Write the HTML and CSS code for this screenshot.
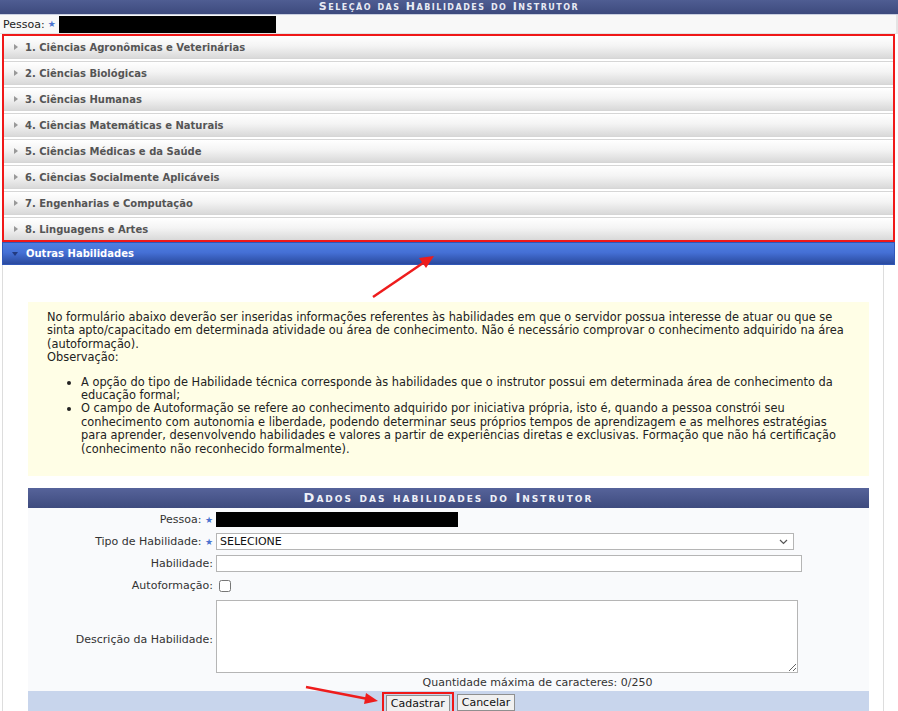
FILE: index.html
```html
<!DOCTYPE html>
<html lang="pt-BR">
<head>
    <meta charset="UTF-8">
    <meta name="viewport" content="width=device-width, initial-scale=1.0">
    <title>Seleção das Habilidades do Instrutor</title>
    <link rel="stylesheet" href="styles.css">
</head>
<body>

<div class="page">
    <div class="caption">Seleção das Habilidades do Instrutor</div>
    <div class="pessoa-row">
        <span>Pessoa:</span>
        <span class="req">&#9733;</span>
        <span class="redacted"></span>
    </div>

    <div class="areas">
        <div class="area"><span class="tri"></span>1. Ciências Agronômicas e Veterinárias</div>
        <div class="area"><span class="tri"></span>2. Ciências Biológicas</div>
        <div class="area"><span class="tri"></span>3. Ciências Humanas</div>
        <div class="area"><span class="tri"></span>4. Ciências Matemáticas e Naturais</div>
        <div class="area"><span class="tri"></span>5. Ciências Médicas e da Saúde</div>
        <div class="area"><span class="tri"></span>6. Ciências Socialmente Aplicáveis</div>
        <div class="area"><span class="tri"></span>7. Engenharias e Computação</div>
        <div class="area"><span class="tri"></span>8. Linguagens e Artes</div>
    </div>

    <div class="area active"><span class="tri down"></span>Outras Habilidades</div>

    <div class="panel">
        <div class="info">
            <p>No formulário abaixo deverão ser inseridas informações referentes às habilidades em que o servidor possua interesse de atuar ou que se sinta apto/capacitado em determinada atividade ou área de conhecimento. Não é necessário comprovar o conhecimento adquirido na área (autoformação).<br>Observação:</p>
            <ul>
                <li>A opção do tipo de Habilidade técnica corresponde às habilidades que o instrutor possui em determinada área de conhecimento da educação formal;</li>
                <li>O campo de Autoformação se refere ao conhecimento adquirido por iniciativa própria, isto é, quando a pessoa constrói seu conhecimento com autonomia e liberdade, podendo determinar seus próprios tempos de aprendizagem e as melhores estratégias para aprender, desenvolvendo habilidades e valores a partir de experiências diretas e exclusivas. Formação que não há certificação (conhecimento não reconhecido formalmente).</li>
            </ul>
        </div>

        <form class="form">
            <div class="form-caption">Dados das habilidades do Instrutor</div>
            <div class="form-body">
                <label class="lbl">Pessoa: <span class="req">&#9733;</span></label>
                <div class="field"><span class="redacted small"></span></div>

                <label class="lbl" for="tipo">Tipo de Habilidade: <span class="req">&#9733;</span></label>
                <div class="field">
                    <div class="select-wrap">
                        <select id="tipo"><option>SELECIONE</option></select>
                        <svg class="chev" width="9" height="6" viewBox="0 0 9 6"><path d="M1 1 L4.5 4.5 L8 1" fill="none" stroke="#555" stroke-width="1.2"/></svg>
                    </div>
                </div>

                <label class="lbl" for="habilidade">Habilidade:</label>
                <div class="field"><input type="text" id="habilidade" class="txt"></div>

                <label class="lbl" for="auto">Autoformação:</label>
                <div class="field"><input type="checkbox" id="auto" class="chk"></div>

                <label class="lbl desc-lbl" for="descricao">Descrição da Habilidade:</label>
                <div class="field"><textarea id="descricao"></textarea></div>

                <div></div>
                <div class="counter">Quantidade máxima de caracteres: 0/250</div>
            </div>
            <div class="form-foot">
                <span class="highlight"><button type="button">Cadastrar</button></span>
                <button type="button">Cancelar</button>
            </div>
        </form>
    </div>

    <svg class="arrows" width="898" height="711" viewBox="0 0 898 711">
        <line x1="373" y1="297" x2="426" y2="261" stroke="#ee1c1c" stroke-width="2.5"/>
        <polygon points="434,256 419,258 426,268" fill="#ee1c1c"/>
        <line x1="306" y1="687" x2="368" y2="699" stroke="#ee1c1c" stroke-width="2.5"/>
        <polygon points="378,701 366,693 364,704" fill="#ee1c1c"/>
    </svg>
</div>

</body>
</html>
```

FILE: styles.css
```css
body {
    margin: 0;
    font-family: "DejaVu Sans", Verdana, sans-serif;
    font-size: 11px;
    color: #222;
    background-color: white;
}
.page {
    position: relative;
    width: 898px;
    height: 711px;
    overflow: hidden;
}
.caption {
    height: 14px;
    line-height: 14px;
    background: linear-gradient(#4f5d92, #3d4a7d);
    color: #e8ebf5;
    font-weight: bold;
    font-variant: small-caps;
    letter-spacing: 1.5px;
    text-align: center;
    font-size: 11px;
    border-bottom: 1px solid #c9cfe0;
}
.pessoa-row {
    display: flex;
    align-items: center;
    gap: 3px;
    height: 18px;
    padding-left: 3px;
    background-color: #f8f8f8;
    border-right: 2px solid #e4e4e4;
    border-bottom: 1px solid #e4e4e4;
}
.req {
    color: #4a72d0;
    font-size: 9px;
}
.redacted {
    display: inline-block;
    width: 217px;
    height: 17px;
    background-color: black;
}
.redacted.small {
    width: 242px;
    height: 15px;
}
.areas {
    margin: 1px 4px 0 3px;
    display: flex;
    flex-direction: column;
    gap: 2px;
    outline: 2px solid #f01818;
    outline-offset: -1px;
}
.area {
    display: flex;
    align-items: center;
    height: 22px;
    padding-left: 10px;
    background: linear-gradient(#ffffff 0%, #f4f4f4 45%, #d9d9d9 100%);
    border: 1px solid #d6d6d6;
    color: #555;
    font-weight: bold;
    font-size: 10px;
}
.tri {
    width: 0;
    height: 0;
    border-top: 3px solid transparent;
    border-bottom: 3px solid transparent;
    border-left: 4px solid #999;
    margin-right: 7px;
}
.area.active {
    margin: 1px 3px 0 2px;
    height: 21px;
    padding-left: 9px;
    background: linear-gradient(#4f7fe0 0%, #4570d6 45%, #2a4a9e 100%);
    border-color: #3057b8;
    color: white;
}
.tri.down {
    border-left: 3px solid transparent;
    border-right: 3px solid transparent;
    border-top: 4px solid #223a80;
    border-bottom: none;
    margin-right: 8px;
}
.panel {
    margin: 0 14px 0 2px;
    padding: 37px 14px 0 25px;
    border-left: 1px solid #ddd;
    border-right: 1px solid #ddd;
    height: 500px;
}
.info {
    background-color: #fffee6;
    padding: 9px 19px 20px 19px;
    font-size: 11.4px;
    line-height: 13.4px;
}
.info p {
    margin: 0 0 11px 0;
}
.info ul {
    margin: 0;
    padding-left: 34px;
}
.form {
    margin-top: 12px;
}
.form-caption {
    height: 20px;
    line-height: 20px;
    background: linear-gradient(#56639a, #3e4b7e);
    color: #eef0f8;
    font-weight: bold;
    font-variant: small-caps;
    letter-spacing: 2px;
    font-size: 13px;
    text-align: center;
}
.form-body {
    display: grid;
    grid-template-columns: 185px 1fr;
    column-gap: 3px;
    row-gap: 5px;
    align-items: center;
    padding-top: 3px;
    background-color: #f9fafc;
}
.lbl {
    text-align: right;
    color: #333;
}
.field {
    display: flex;
    align-items: center;
    min-height: 17px;
}
.select-wrap {
    position: relative;
    width: 578px;
}
.select-wrap select {
    appearance: none;
    width: 100%;
    height: 17px;
    padding: 0 0 0 3px;
    border: 1px solid #b5b5b5;
    background-color: white;
    font-family: inherit;
    font-size: 11px;
    color: #111;
}
.chev {
    position: absolute;
    right: 6px;
    top: 6px;
}
.txt {
    width: 586px;
    height: 17px;
    box-sizing: border-box;
    border: 1px solid #b5b5b5;
    padding: 0 3px;
}
.chk {
    margin: 1px 0 0 3px;
    width: 12px;
    height: 12px;
}
textarea {
    width: 582px;
    height: 73px;
    box-sizing: border-box;
    border: 1px solid #b5b5b5;
    margin-top: 1px;
}
.desc-lbl {
    padding-top: 6px;
}
.counter {
    text-align: center;
    color: #333;
    padding: 0 0 2px 0;
    margin-left: -10px;
    margin-top: -2px;
}
.form-foot {
    display: flex;
    justify-content: center;
    align-items: flex-start;
    gap: 3px;
    padding: 3px 0 3px 0;
    background-color: #c8d5ec;
}
.form-foot button {
    font-family: inherit;
    font-size: 11px;
    color: #111;
    background-color: #f0f0f0;
    border: 1px solid #8f8f8f;
    padding: 1px 4px;
}
.highlight {
    display: inline-block;
    border: 2px solid #f01818;
    padding: 1px 2px;
    margin-top: -2px;
}
.arrows {
    position: absolute;
    left: 0;
    top: 0;
    pointer-events: none;
}
```
